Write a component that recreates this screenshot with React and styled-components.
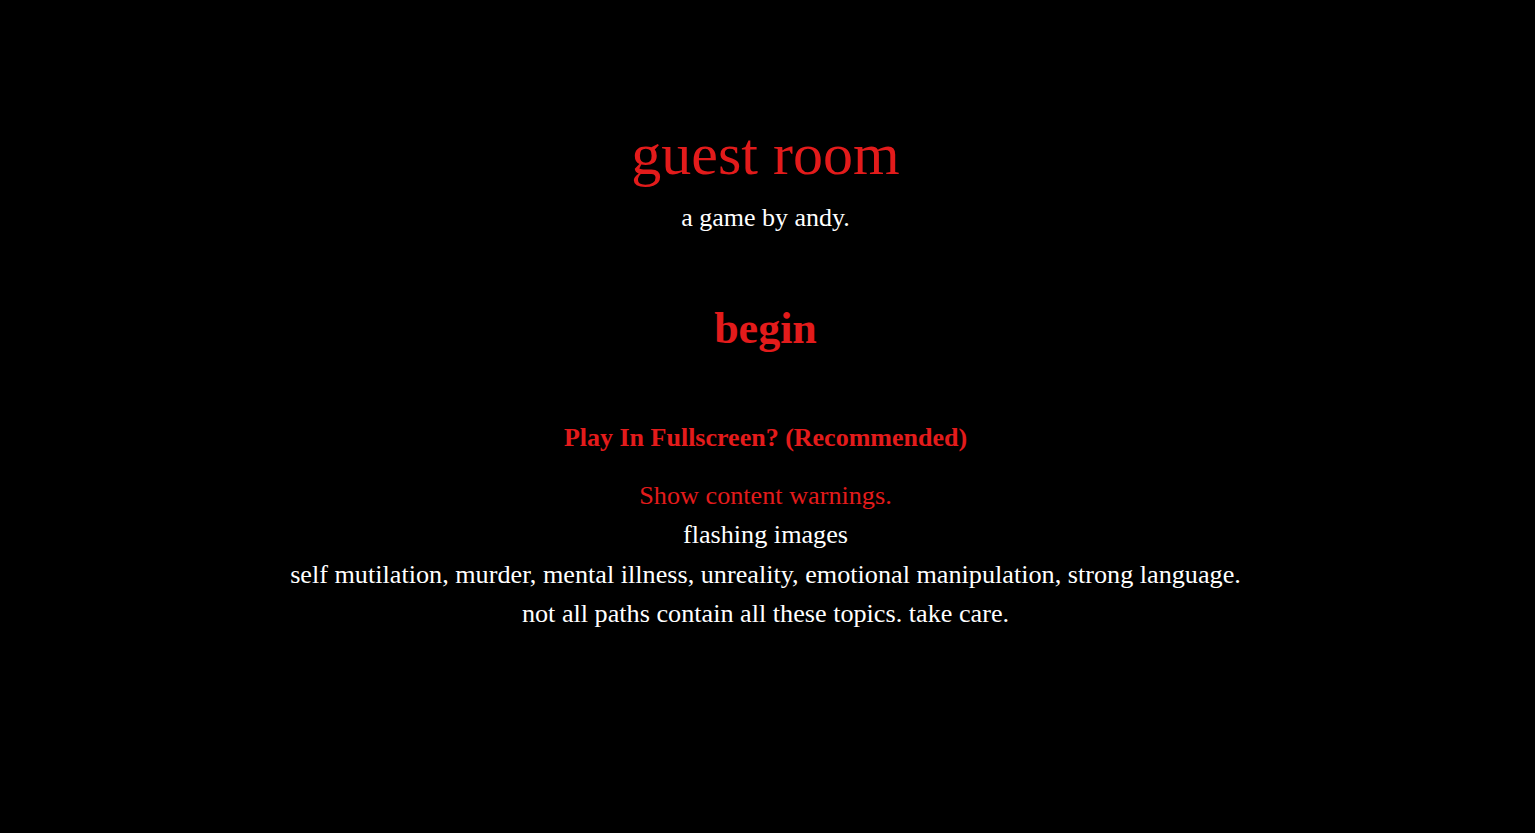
import React from "react";
import styled, { createGlobalStyle } from "styled-components";

const Global = createGlobalStyle`
  html, body { margin: 0; padding: 0; background: #000; }
  body { font-family: "Liberation Serif", "Times New Roman", serif; color: #fff; }
`;

const RED = "#e31b1b";

const Page = styled.main`
  min-height: 833px;
  display: flex;
  flex-direction: column;
  align-items: center;
  padding: 120px 4px 0 0;
  box-sizing: border-box;
  text-align: center;
`;

const Title = styled.h1`
  margin: 0;
  font-size: 60px;
  font-weight: normal;
  line-height: 69px;
  color: ${RED};
`;

const Byline = styled.p`
  margin: 9px 0 0;
  font-size: 26px;
  line-height: 39px;
  color: #fff;
`;

const Begin = styled.a`
  margin-top: 66px;
  font-size: 44px;
  font-weight: bold;
  line-height: 51px;
  color: ${RED};
  text-decoration: none;
  cursor: pointer;
`;

const Fullscreen = styled.a`
  margin-top: 64px;
  font-size: 26px;
  font-weight: bold;
  line-height: 39px;
  color: ${RED};
  text-decoration: none;
  cursor: pointer;
`;

const Warnings = styled.div`
  margin-top: 19px;
  display: flex;
  flex-direction: column;
  align-items: center;
`;

const Line = styled.div`
  font-size: 26.2px;
  line-height: 39.3px;
  color: ${(p) => (p.$red ? RED : "#fff")};
  cursor: ${(p) => (p.$red ? "pointer" : "default")};
`;

export default function App() {
  return (
    <>
      <Global />
      <Page>
        <Title>guest room</Title>
        <Byline>a game by andy.</Byline>
        <Begin>begin</Begin>
        <Fullscreen>Play In Fullscreen? (Recommended)</Fullscreen>
        <Warnings>
          <Line $red>Show content warnings.</Line>
          <Line>flashing images</Line>
          <Line>self mutilation, murder, mental illness, unreality, emotional manipulation, strong language.</Line>
          <Line>not all paths contain all these topics. take care.</Line>
        </Warnings>
      </Page>
    </>
  );
}
